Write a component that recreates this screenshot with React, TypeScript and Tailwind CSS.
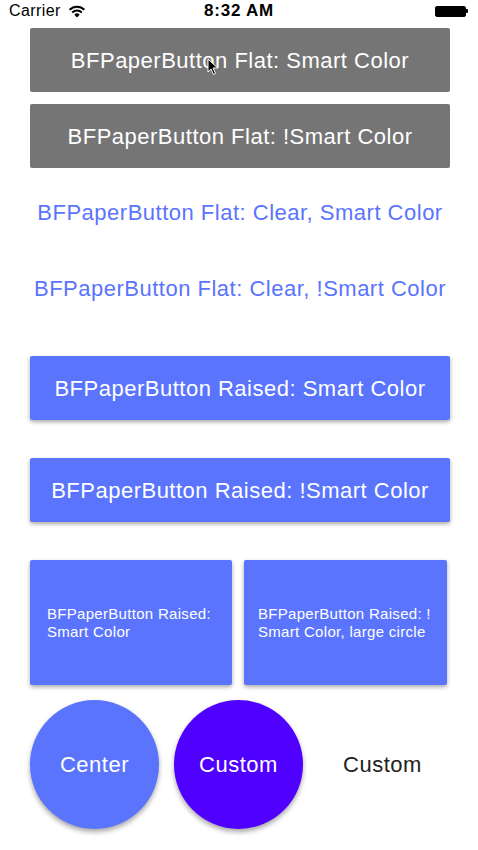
function StatusBar() {
  return (
    <div className="relative flex h-[22px] items-center pl-[9px] pr-[10px] text-[16px] tracking-[0.4px] text-black">
      <div className="flex items-center gap-[7px]">
        <span>Carrier</span>
        <svg width="18" height="13" viewBox="0 0 16 12">
          <path d="M8 11.5 L5.6 8.9 A3.4 3.4 0 0 1 10.4 8.9 Z" fill="black" />
          <path d="M3.6 6.9 A6.2 6.2 0 0 1 12.4 6.9" stroke="black" strokeWidth="1.8" fill="none" />
          <path d="M1.2 4.4 A9.6 9.6 0 0 1 14.8 4.4" stroke="black" strokeWidth="1.8" fill="none" />
        </svg>
      </div>
      <span className="absolute left-1/2 -translate-x-1/2 text-[17px] font-bold tracking-[0.8px]">8:32 AM</span>
      <div className="ml-auto flex items-center">
        <div className="h-[11px] w-[31px] rounded-[2px] border border-black bg-black" />
        <div className="h-[4px] w-[2px] rounded-r-[1px] bg-black" />
      </div>
    </div>
  )
}

function Cursor() {
  return (
    <svg className="absolute left-[207px] top-[58px]" width="12" height="18" viewBox="0 0 12 18">
      <path d="M1 1 L1 14 L4 11 L6.5 16.5 L8.5 15.5 L6 10 L10.5 10 Z" fill="black" stroke="white" strokeWidth="1" />
    </svg>
  )
}

function App() {
  return (
    <div className="relative h-[850px] w-[478px] overflow-hidden bg-white" style={{ fontFamily: '"Liberation Sans", Arial, sans-serif' }}>
      <StatusBar />
      <div className="flex flex-col pl-[30px] pr-[28px] pt-[6px]">
        <div className="flex h-[64px] items-center justify-center rounded-[2px] bg-[#757575] text-[22px] tracking-[0.5px] text-white">
          BFPaperButton Flat: Smart Color
        </div>
        <div className="mt-[12px] flex h-[64px] items-center justify-center rounded-[2px] bg-[#757575] text-[22px] tracking-[0.5px] text-white">
          BFPaperButton Flat: !Smart Color
        </div>
        <div className="mt-[12px] flex h-[64px] items-center justify-center text-[22px] tracking-[0.5px] text-[#5a74fe]">
          BFPaperButton Flat: Clear, Smart Color
        </div>
        <div className="mt-[12px] flex h-[64px] items-center justify-center text-[22px] tracking-[0.5px] text-[#5a74fe]">
          BFPaperButton Flat: Clear, !Smart Color
        </div>
        <div className="mt-[36px] flex h-[64px] items-center justify-center rounded-[2px] bg-[#5a74fe] text-[22px] tracking-[0.5px] text-white shadow-[0_2px_4px_rgba(0,0,0,0.35)]">
          BFPaperButton Raised: Smart Color
        </div>
        <div className="mt-[38px] flex h-[64px] items-center justify-center rounded-[2px] bg-[#5a74fe] text-[22px] tracking-[0.5px] text-white shadow-[0_2px_4px_rgba(0,0,0,0.35)]">
          BFPaperButton Raised: !Smart Color
        </div>
        <div className="mt-[38px] flex gap-[12px]">
          <div className="flex h-[125px] w-[202px] items-center rounded-[2px] bg-[#5a74fe] pl-[17px] pr-[6px] text-[15px] leading-[18px] tracking-[0.3px] text-white shadow-[0_2px_4px_rgba(0,0,0,0.35)]">
            BFPaperButton Raised: Smart Color
          </div>
          <div className="flex h-[125px] w-[203px] items-center rounded-[2px] bg-[#5a74fe] pl-[14px] pr-[2px] text-[15px] leading-[18px] tracking-[0.3px] text-white shadow-[0_2px_4px_rgba(0,0,0,0.35)]">
            BFPaperButton Raised: ! Smart Color, large circle
          </div>
        </div>
        <div className="mt-[15px] flex items-center">
          <div className="flex h-[129px] w-[129px] items-center justify-center rounded-full bg-[#5a74fe] text-[22px] tracking-[0.5px] text-white shadow-[0_3px_5px_rgba(0,0,0,0.35)]">
            Center
          </div>
          <div className="ml-[15px] flex h-[129px] w-[129px] items-center justify-center rounded-full bg-[#5000ff] text-[22px] tracking-[0.5px] text-white shadow-[0_3px_5px_rgba(0,0,0,0.35)]">
            Custom
          </div>
          <div className="ml-[15px] flex h-[129px] w-[129px] items-center justify-center text-[22px] tracking-[0.5px] text-[#222]">
            Custom
          </div>
        </div>
      </div>
      <Cursor />
    </div>
  )
}

export default App
